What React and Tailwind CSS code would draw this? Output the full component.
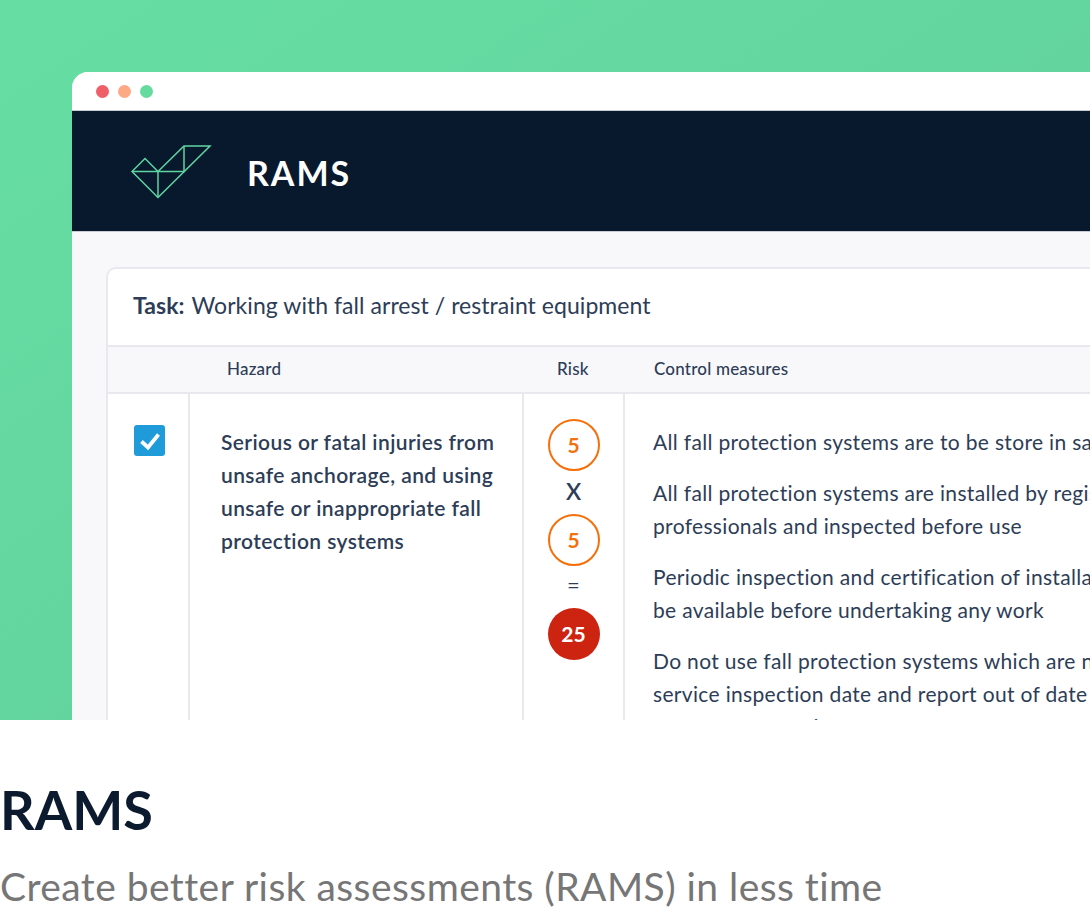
const font = "font-['Lato','Liberation_Sans',sans-serif]";

function Logo() {
  return (
    <svg width="82" height="56" viewBox="0 0 82 56" fill="none" stroke="#5fd6a0" strokeWidth="1.5" className="block flex-none">
      <path d="M1 26.5 L14 13.5 L27 26.5 L53 1 L79 1 L27 52.5 Z" />
      <path d="M1 26.5 H53 V1" />
      <path d="M27 26.5 V52.5" />
    </svg>
  );
}

function Circle({ children, filled }) {
  return filled ? (
    <div className="w-[52px] h-[52px] rounded-full bg-[#cd2311] text-white flex items-center justify-center text-[21px] font-bold">{children}</div>
  ) : (
    <div className="w-[52px] h-[52px] rounded-full border-2 border-[#f56f0a] text-[#f56f0a] flex items-center justify-center text-[21px] font-bold">{children}</div>
  );
}

export default function App() {
  return (
    <div className={`w-[1090px] h-[912px] overflow-hidden bg-white ${font}`}>
      <div className="h-[720px] overflow-hidden bg-gradient-to-br from-[#66dea3] to-[#60cc9a] pl-[72px] pt-[72px]">
        <div className="w-[1100px] h-[700px] rounded-tl-[16px] overflow-hidden bg-[#f8f8fb] text-[#2d3d57]">
          <div className="h-[39px] bg-white border-b border-[#c9ccd3] flex items-center gap-[9px] pl-[24px]">
            <span className="w-[13px] h-[13px] rounded-full bg-[#ee5f67]" />
            <span className="w-[13px] h-[13px] rounded-full bg-[#fda983]" />
            <span className="w-[13px] h-[13px] rounded-full bg-[#66dba0]" />
          </div>
          <div className="h-[121px] bg-[#08192e] border-b border-[#c9ccd3] flex items-center pl-[59px] pt-[3px]">
            <Logo />
            <span className="ml-[34px] text-white text-[34px] font-bold tracking-[2px]">RAMS</span>
          </div>
          <div className="pl-[34px] pt-[35px]">
            <div className="border-2 border-[#e8e8ee] border-r-0 rounded-tl-[10px] bg-white">
              <div className="h-[76px] flex items-center pl-[25px] pb-[4px] text-[23px] tracking-[0.05px]">
                <span className="font-bold mr-[7px]">Task:</span>
                <span>Working with fall arrest / restraint equipment</span>
              </div>
              <div className="h-[49px] flex items-center bg-[#f8f8fb] border-y-2 border-[#e8e8ee] pb-[2px] text-[17px] font-medium tracking-[0.2px]">
                <span className="w-[119px] flex-none" />
                <span className="w-[330px] flex-none">Hazard</span>
                <span className="w-[97px] flex-none">Risk</span>
                <span>Control measures</span>
              </div>
              <div className="flex h-[330px]">
                <div className="w-[82px] flex-none border-r-2 border-[#e8e8ee] pl-[26px] pt-[31px]">
                  <div className="w-[31px] h-[31px] rounded-[3px] bg-[#1f9bd9]">
                    <svg width="31" height="31" viewBox="0 0 31 31" fill="none" stroke="white" strokeWidth="3.8" className="block">
                      <path d="M7.5 16.5 L14 22.5 L24.5 9.5" />
                    </svg>
                  </div>
                </div>
                <div className="w-[334px] flex-none border-r-2 border-[#e8e8ee] pl-[31px] pt-[31px] text-[21px] leading-[33px] font-semibold tracking-[0.4px]">
                  Serious or fatal injuries from<br />
                  unsafe anchorage, and using<br />
                  unsafe or inappropriate fall<br />
                  protection systems
                </div>
                <div className="w-[101px] flex-none border-r-2 border-[#e8e8ee] pt-[25px] flex flex-col items-center">
                  <Circle>5</Circle>
                  <div className="h-[43px] flex items-center pb-[3px] text-[23px] font-semibold">X</div>
                  <Circle>5</Circle>
                  <div className="h-[42px] flex items-center pb-[5px] text-[22px]">=</div>
                  <Circle filled>25</Circle>
                </div>
                <div className="pl-[28px] pt-[31px] text-[21px] leading-[33px] whitespace-nowrap tracking-[0.33px]">
                  <p className="mb-[18px]">All fall protection systems are to be store in safe and dry conditions</p>
                  <p className="mb-[18px]">All fall protection systems are installed by registered<br />professionals and inspected before use</p>
                  <p className="mb-[18px]">Periodic inspection and certification of installations must<br />be available before undertaking any work</p>
                  <p>Do not use fall protection systems which are not within<br />service inspection date and report out of date equipment<br />to your manager if seen</p>
                </div>
              </div>
            </div>
          </div>
        </div>
      </div>
      <div className="pt-[57px] text-[54px] leading-[66px] font-bold text-[#0b1a2e]">RAMS</div>
      <div className="pt-[20px] text-[39px] leading-[46px] text-[#767676] tracking-[0.45px]">Create better risk assessments (RAMS) in less time</div>
    </div>
  );
}
